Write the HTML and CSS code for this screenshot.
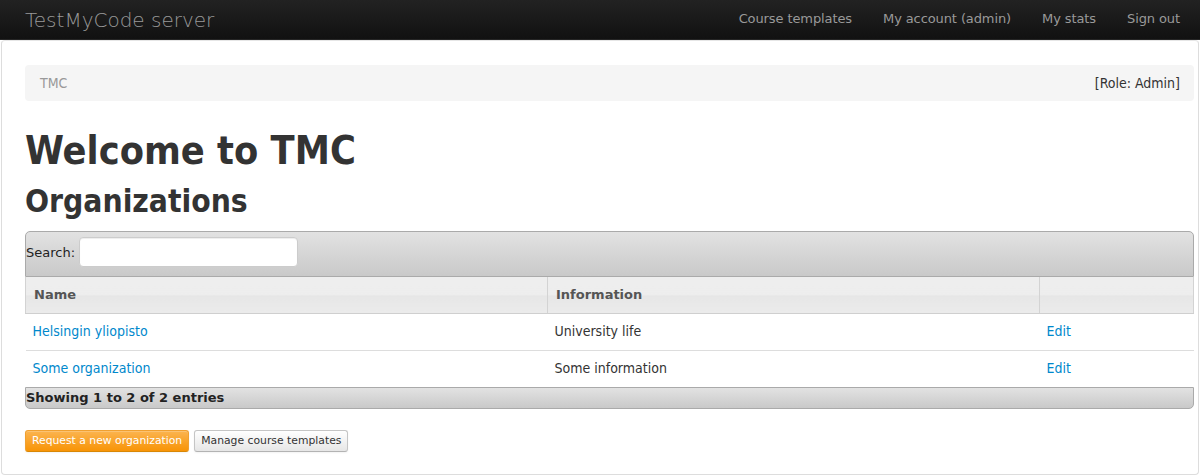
FILE: index.html
```html
<!DOCTYPE html>
<html>
<head>
<meta charset="utf-8">
<title>TestMyCode server</title>
<link rel="stylesheet" href="styles.css">
</head>
<body>
<header class="navbar">
  <a class="brand" href="#">TestMyCode server</a>
  <ul class="nav">
    <li><a href="#">Course templates</a></li>
    <li><a href="#">My account (admin)</a></li>
    <li><a href="#">My stats</a></li>
    <li><a href="#">Sign out</a></li>
  </ul>
</header>
<main class="page">
  <div class="breadcrumb">
    <span class="crumb">TMC</span>
    <span class="role">[Role: Admin]</span>
  </div>
  <h1>Welcome to TMC</h1>
  <h2>Organizations</h2>
  <div class="dt">
    <div class="dt-toolbar dt-top">
      <label class="search">Search: <input type="text"></label>
    </div>
    <table class="dt-table">
      <thead>
        <tr>
          <th class="col-name">Name</th>
          <th class="col-info">Information</th>
          <th class="col-edit"></th>
        </tr>
      </thead>
      <tbody>
        <tr>
          <td><a href="#">Helsingin yliopisto</a></td>
          <td>University life</td>
          <td><a href="#">Edit</a></td>
        </tr>
        <tr>
          <td><a href="#">Some organization</a></td>
          <td>Some information</td>
          <td><a href="#">Edit</a></td>
        </tr>
      </tbody>
    </table>
    <div class="dt-toolbar dt-bottom">Showing 1 to 2 of 2 entries</div>
  </div>
  <div class="actions">
    <button class="btn btn-warning">Request a new organization</button>
    <button class="btn">Manage course templates</button>
  </div>
</main>
</body>
</html>
```
FILE: styles.css
```css
html, body {
  margin: 0;
  padding: 0;
  background: #fff;
}
body {
  font-family: "DejaVu Sans Condensed", "DejaVu Sans", sans-serif;
  font-stretch: condensed;
  font-size: 14px;
  line-height: 20px;
  color: #333;
}
a {
  color: #0088cc;
  text-decoration: none;
}

/* navbar */
.navbar {
  height: 40px;
  box-sizing: border-box;
  display: flex;
  align-items: center;
  justify-content: space-between;
  padding: 0 5px 0 25px;
  background: linear-gradient(to bottom, #222222, #111111);
  border-bottom: 1px solid #252525;
}
.brand {
  font-family: "DejaVu Sans", sans-serif;
  font-stretch: normal;
  font-weight: 200;
  font-size: 20px;
  color: #999;
  line-height: 20px;
}
.nav {
  display: flex;
  list-style: none;
  margin: 0;
  padding: 0;
}
.nav li + li { margin-left: 1px; }
.nav a {
  display: block;
  padding: 10px 15px 11px;
  font-family: "DejaVu Sans", sans-serif;
  font-stretch: normal;
  font-size: 13px;
  letter-spacing: -0.1px;
  color: #999;
}

/* page */
.page {
  margin: 0 1px;
  height: 435px;
  box-sizing: border-box;
  border: 1px solid #dddddd;
  border-top-color: #e6e6e6;
  border-radius: 4px;
  padding: 24px 4px 0 23px;
}
.breadcrumb {
  display: flex;
  justify-content: space-between;
  padding: 8px 14px 8px 15px;
  background: #f5f5f5;
  border-radius: 4px;
  margin-bottom: 30px;
}
.crumb { color: #999; }
.role { color: #333; }

h1, h2 {
  font-weight: bold;
  color: #333;
  line-height: 40px;
  margin: 10px 0;
}
h1 { font-size: 39.3px; margin-top: 0; }
h2 { font-size: 31.5px; }

/* datatable */
.dt { margin-top: 10px; }
.dt-toolbar {
  font-family: "DejaVu Sans", sans-serif;
  font-stretch: normal;
  font-size: 13px;
  border: 1px solid #aaaaaa;
  background: linear-gradient(to bottom, #e2e2e2, #c9c9c9);
  color: #222;
}
.dt-top {
  border-radius: 5px 5px 0 0;
  padding: 5px 0 9px 0;
}
.search {
  display: flex;
  align-items: baseline;
  gap: 4px;
}
.search input {
  width: 219px;
  height: 30px;
  box-sizing: border-box;
  padding: 4px 6px;
  font-size: 13px;
  line-height: 20px;
  border: 1px solid #cccccc;
  border-radius: 4px;
  background: #fff;
  box-shadow: inset 0 1px 1px rgba(0,0,0,0.075);
  margin: 0;
}
.dt-bottom {
  border-radius: 0 0 5px 5px;
  font-weight: bold;
  line-height: 20px;
  padding: 0;
}
.dt-table {
  width: 100%;
  border-collapse: collapse;
}
.dt-table th {
  font-family: "DejaVu Sans", sans-serif;
  font-stretch: normal;
  font-size: 13px;
  text-align: left;
  color: #555;
  font-weight: bold;
  padding: 8px;
  line-height: 20px;
  background: linear-gradient(to bottom, #eeeeee 0%, #ededed 50%, #e6e6e6 52%, #ebebeb 100%);
  border: 1px solid #d3d3d3;
  border-top: none;
  border-bottom-color: #cfcfcf;
}
.col-name { width: 505px; }
.col-info { width: 475px; }
.dt-table td {
  padding: 7px 8px 9px 7px;
  line-height: 20px;
  border-top: 1px solid #dddddd;
}

/* buttons */
.actions {
  margin-top: 21px;
  display: flex;
  gap: 5px;
}
.btn {
  font-family: "DejaVu Sans", sans-serif;
  font-stretch: normal;
  font-size: 10.8px;
  line-height: 20px;
  padding: 0 6px;
  border-radius: 3px;
  border: 1px solid #c5c5c5;
  border-bottom-color: #b3b3b3;
  background: linear-gradient(to bottom, #ffffff, #e6e6e6);
  color: #333;
  box-shadow: inset 0 1px 0 rgba(255,255,255,0.2), 0 1px 2px rgba(0,0,0,0.05);
  cursor: pointer;
}
.btn-warning {
  color: #fff;
  background: linear-gradient(to bottom, #fbb450, #f89406);
  border-color: #f0a030 #f0a030 #d88705;
}
```
